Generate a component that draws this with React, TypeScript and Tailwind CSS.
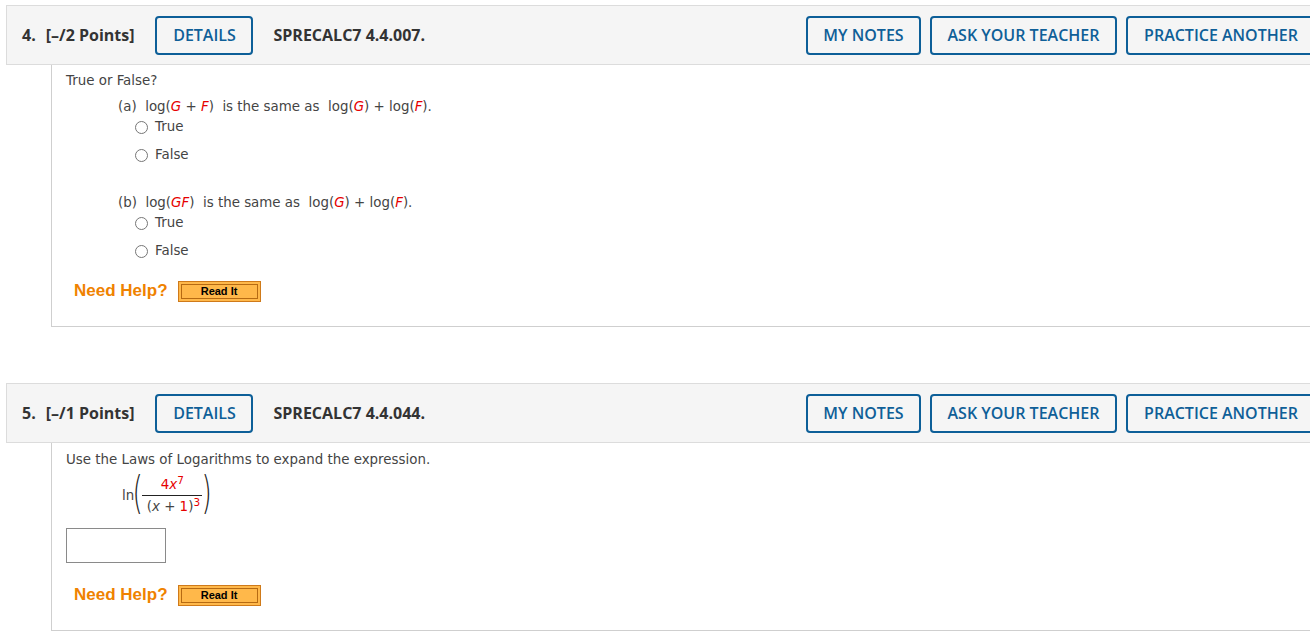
import React from 'react';

const body = { fontFamily: '"DejaVu Sans", Verdana, sans-serif' };
const head = { fontFamily: '"Open Sans", Arial, sans-serif' };

function HeaderButton({ label, className = '' }: { label: string; className?: string }) {
  return (
    <div
      className={`h-[39px] flex items-center justify-center rounded-[4px] border-2 border-[#0d5f98] text-[#0f5f98] text-[16px] font-semibold shrink-0 ${className}`}
      style={head}
    >
      {label}
    </div>
  );
}

function QuestionHeader({ num, points, code }: { num: string; points: string; code: string }) {
  return (
    <div className="w-[1320px] h-[60px] flex items-center bg-[#f5f5f5] border border-[#dcdcdc] pl-[15px]" style={head}>
      <span className="text-[16px] font-bold text-[#333]">{num}</span>
      <span className="ml-[10px] text-[16px] font-bold text-[#333]">{points}</span>
      <HeaderButton label="DETAILS" className="ml-[21px] w-[98px]" />
      <span className="ml-[20px] text-[16px] font-bold text-[#333]">{code}</span>
      <div className="ml-auto flex gap-[9px] pr-[9px]">
        <HeaderButton label="MY NOTES" className="w-[115px]" />
        <HeaderButton label="ASK YOUR TEACHER" className="w-[187px]" />
        <HeaderButton label="PRACTICE ANOTHER" className="w-[190px]" />
      </div>
    </div>
  );
}

function Radio({ label }: { label: string }) {
  return (
    <div className="flex items-center h-[18px] text-[13.4px] text-[#444]">
      <span className="w-[13px] h-[13px] rounded-full border border-[#767676] bg-white mr-[7px]" />
      {label}
    </div>
  );
}

function NeedHelp() {
  return (
    <div className="flex items-center h-[22px]">
      <span className="text-[17px] font-bold text-[#ef8200]" style={{ fontFamily: '"Liberation Sans", Arial, sans-serif' }}>
        Need Help?
      </span>
      <div className="ml-[10px] w-[83px] h-[21px] bg-[#ffb84a] border border-[#cf7a1a] p-[2px]">
        <div
          className="w-full h-full border border-[#b66a12] flex items-center justify-center text-[11px] font-bold text-black"
          style={{ fontFamily: '"Liberation Sans", Arial, sans-serif' }}
        >
          Read It
        </div>
      </div>
    </div>
  );
}

const R = ({ children }: { children: React.ReactNode }) => (
  <i className="text-[#e60000]">{children}</i>
);

export default function App() {
  return (
    <div className="w-[1310px] h-[633px] overflow-hidden bg-white pt-[5px] pl-[6px]" style={body}>
      {/* Question 4 */}
      <QuestionHeader num="4." points="[–/2 Points]" code="SPRECALC7 4.4.007." />
      <div className="ml-[45px] w-[1300px] h-[262px] border-l border-b border-[#cfcfcf] pl-[14px] pt-[7px] text-[#444] text-[13.4px]">
        <div className="h-[18px] leading-[18px]">True or False?</div>
        <div className="ml-[52px] mt-[8px]">
          <div className="h-[18px] leading-[18px] whitespace-pre">
            (a)  log(<R>G</R> + <R>F</R>)  is the same as  log(<R>G</R>) + log(<R>F</R>).
          </div>
          <div className="ml-[17px] mt-[2px] flex flex-col gap-[10px]">
            <Radio label="True" />
            <Radio label="False" />
          </div>
          <div className="h-[18px] leading-[18px] whitespace-pre mt-[30px]">
            (b)  log(<R>GF</R>)  is the same as  log(<R>G</R>) + log(<R>F</R>).
          </div>
          <div className="ml-[17px] mt-[2px] flex flex-col gap-[10px]">
            <Radio label="True" />
            <Radio label="False" />
          </div>
        </div>
        <div className="mt-[20px] ml-[8px]">
          <NeedHelp />
        </div>
      </div>

      <div className="h-[56px]" />

      {/* Question 5 */}
      <QuestionHeader num="5." points="[–/1 Points]" code="SPRECALC7 4.4.044." />
      <div className="ml-[45px] w-[1300px] h-[188px] border-l border-b border-[#cfcfcf] pl-[14px] pt-[8px] text-[#444] text-[13.4px]">
        <div className="h-[18px] leading-[18px]">Use the Laws of Logarithms to expand the expression.</div>
        <div className="ml-[56px] mt-[5px] flex items-center h-[44px]">
          <span>ln</span>
          <span className="text-[44px] leading-none font-extralight text-[#222] -mt-[6px] -ml-[5px] -mr-[4px] scale-x-[0.6]">(</span>
          <div className="flex flex-col items-center leading-[16px]">
            <div className="px-[4px] pb-[2px]">
              <span className="text-[#e60000]">4</span>
              <i className="text-[#e60000]">x</i>
              <sup className="text-[10.5px] text-[#e60000] -top-[5px]">7</sup>
            </div>
            <div className="w-[60px] h-px bg-[#222]" />
            <div className="pt-[3px] pl-[2px]">
              (<i>x</i> + <span className="text-[#e60000]">1</span>)
              <sup className="text-[10.5px] text-[#e60000] -top-[5px]">3</sup>
            </div>
          </div>
          <span className="text-[44px] leading-none font-extralight text-[#222] -mt-[6px] -ml-[4px] scale-x-[0.6]">)</span>
        </div>
        <div className="mt-[10px] w-[100px] h-[35px] border border-[#8a8a8a] bg-white" />
        <div className="mt-[21px] ml-[8px]">
          <NeedHelp />
        </div>
      </div>
    </div>
  );
}
